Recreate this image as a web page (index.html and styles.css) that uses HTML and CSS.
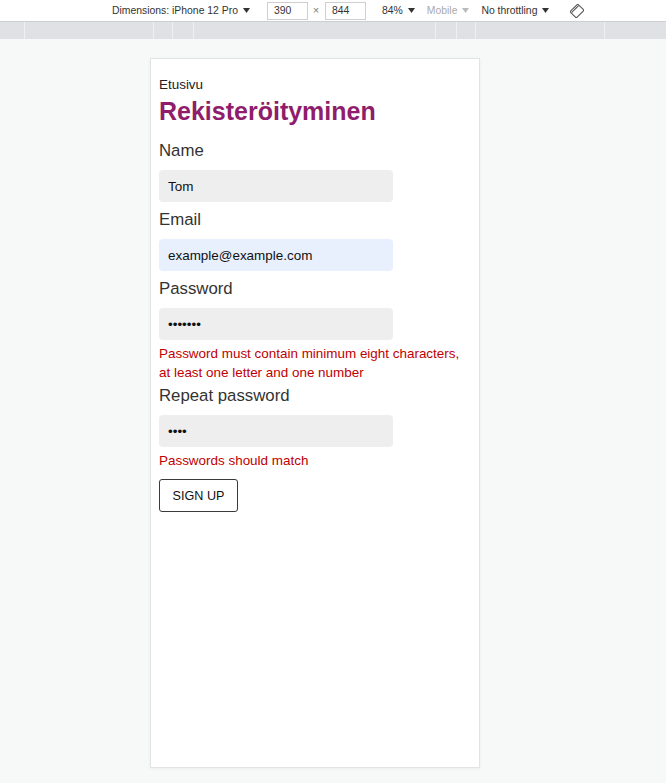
FILE: index.html
```html
<!DOCTYPE html>
<html lang="fi">
<head>
<meta charset="utf-8">
<title>Rekisteröityminen</title>
<link rel="stylesheet" href="styles.css">
</head>
<body>
<div class="toolbar">
  <span class="tb-dim">Dimensions: iPhone 12 Pro</span>
  <svg class="caret" width="7" height="5" viewBox="0 0 7 5"><polygon points="0,0 7,0 3.5,5"/></svg>
  <span class="tb-box tb-w">390</span>
  <span class="tb-times">×</span>
  <span class="tb-box tb-h">844</span>
  <span class="tb-zoom">84%</span>
  <svg class="caret" width="7" height="5" viewBox="0 0 7 5"><polygon points="0,0 7,0 3.5,5"/></svg>
  <span class="tb-mobile">Mobile</span>
  <svg class="caret caret-dim" width="7" height="5" viewBox="0 0 7 5"><polygon points="0,0 7,0 3.5,5"/></svg>
  <span class="tb-throttle">No throttling</span>
  <svg class="caret" width="7" height="5" viewBox="0 0 7 5"><polygon points="0,0 7,0 3.5,5"/></svg>
  <svg class="tb-rotate" width="14" height="14" viewBox="0 0 14 14">
    <g transform="rotate(45 7 7)" fill="none" stroke="#555" stroke-width="1.1">
      <rect x="2.5" y="1.5" width="9" height="11" rx="1.2"/>
      <line x1="4.3" y1="2" x2="4.3" y2="12"/>
    </g>
  </svg>
</div>
<div class="ruler">
  <div></div><div></div><div></div><div></div><div></div><div></div><div></div><div></div><div class="last"></div>
</div>
<main class="stage">
  <div class="device">
    <a class="crumb" href="#">Etusivu</a>
    <h1 class="title">Rekisteröityminen</h1>
    <form class="form">
      <label class="label first" for="name">Name</label>
      <input class="field" id="name" type="text" value="Tom">
      <label class="label" for="email">Email</label>
      <input class="field autofill" id="email" type="email" value="example@example.com">
      <label class="label" for="pw">Password</label>
      <input class="field" id="pw" type="password" value="1234567">
      <p class="error">Password must contain minimum eight characters, at least one letter and one number</p>
      <label class="label after-error" for="pw2">Repeat password</label>
      <input class="field" id="pw2" type="password" value="1234">
      <p class="error">Passwords should match</p>
      <button class="submit" type="button">SIGN UP</button>
    </form>
  </div>
</main>
</body>
</html>
```
FILE: styles.css
```css
html, body {
  margin: 0;
  padding: 0;
}
body {
  width: 666px;
  height: 783px;
  overflow: hidden;
  background: #f7f8f8;
  font-family: "Liberation Sans", Arial, sans-serif;
}

/* devtools toolbar */
.toolbar {
  height: 22px;
  box-sizing: border-box;
  background: #ffffff;
  border-bottom: 1px solid #cbcdd1;
  display: flex;
  align-items: center;
  padding-left: 112px;
  font-size: 10.4px;
  color: #333;
  white-space: nowrap;
}
.caret {
  fill: #333;
  margin-left: 5px;
  flex: none;
}
.caret-dim {
  fill: #bbb;
}
.tb-box {
  box-sizing: border-box;
  width: 41px;
  height: 18px;
  border: 1px solid #cfcfcf;
  padding-left: 6px;
  line-height: 16px;
  color: #333;
}
.tb-w {
  margin-left: 17px;
}
.tb-times {
  margin: 0 6px 0 5px;
  color: #777;
}
.tb-zoom {
  margin-left: 16px;
}
.tb-mobile {
  margin-left: 12px;
  color: #aaa;
}
.tb-throttle {
  margin-left: 12px;
}
.tb-rotate {
  margin-left: 21px;
}

/* media query ruler */
.ruler {
  height: 17px;
  background: #dfe1e5;
  display: grid;
  grid-template-columns: 25px 129px 19px 21px 242px 21px 19px 129px 1fr;
}
.ruler div {
  border-right: 1px solid #eef0f2;
}
.ruler div.last {
  border-right: none;
}

/* emulated device */
.stage {
  padding-top: 19px;
  padding-left: 150px;
}
.device {
  box-sizing: border-box;
  width: 330px;
  height: 710px;
  background: #ffffff;
  border: 1px solid #e1e3e4;
  box-shadow: 0 1px 3px rgba(0, 0, 0, 0.05);
  padding: 18px 8px;
  display: flex;
  flex-direction: column;
  align-items: flex-start;
}
.crumb {
  font-size: 13.44px;
  line-height: 16px;
  color: #222;
  text-decoration: none;
}
.title {
  margin: 3px 0 0;
  font-size: 25px;
  line-height: 30px;
  font-weight: bold;
  color: #8f1d6b;
}
.form {
  margin: 0;
  display: flex;
  flex-direction: column;
  align-items: flex-start;
}
.label {
  margin-top: 7.5px;
  font-size: 16.8px;
  line-height: 20px;
  color: #333;
}
.label.first {
  margin-top: 14.5px;
}
.label.after-error {
  margin-top: 3.5px;
}
.field {
  box-sizing: border-box;
  margin: 9.5px 0 0;
  width: 234px;
  height: 32px;
  border: none;
  border-radius: 4px;
  background: #eeeeee;
  padding: 0 9px;
  font-family: "Liberation Sans", Arial, sans-serif;
  font-size: 13.44px;
  color: #111;
  outline: none;
}
.field.autofill {
  background: #e8f0fe;
}
.error {
  margin: 4px 0 0;
  width: 310px;
  font-size: 13.44px;
  line-height: 19px;
  color: #c00000;
}
.submit {
  margin-top: 9px;
  box-sizing: border-box;
  width: 79px;
  height: 33px;
  padding: 0;
  background: #ffffff;
  border: 1px solid #3a3a3a;
  border-radius: 3px;
  font-family: "Liberation Sans", Arial, sans-serif;
  font-size: 12.6px;
  color: #111;
}
```
